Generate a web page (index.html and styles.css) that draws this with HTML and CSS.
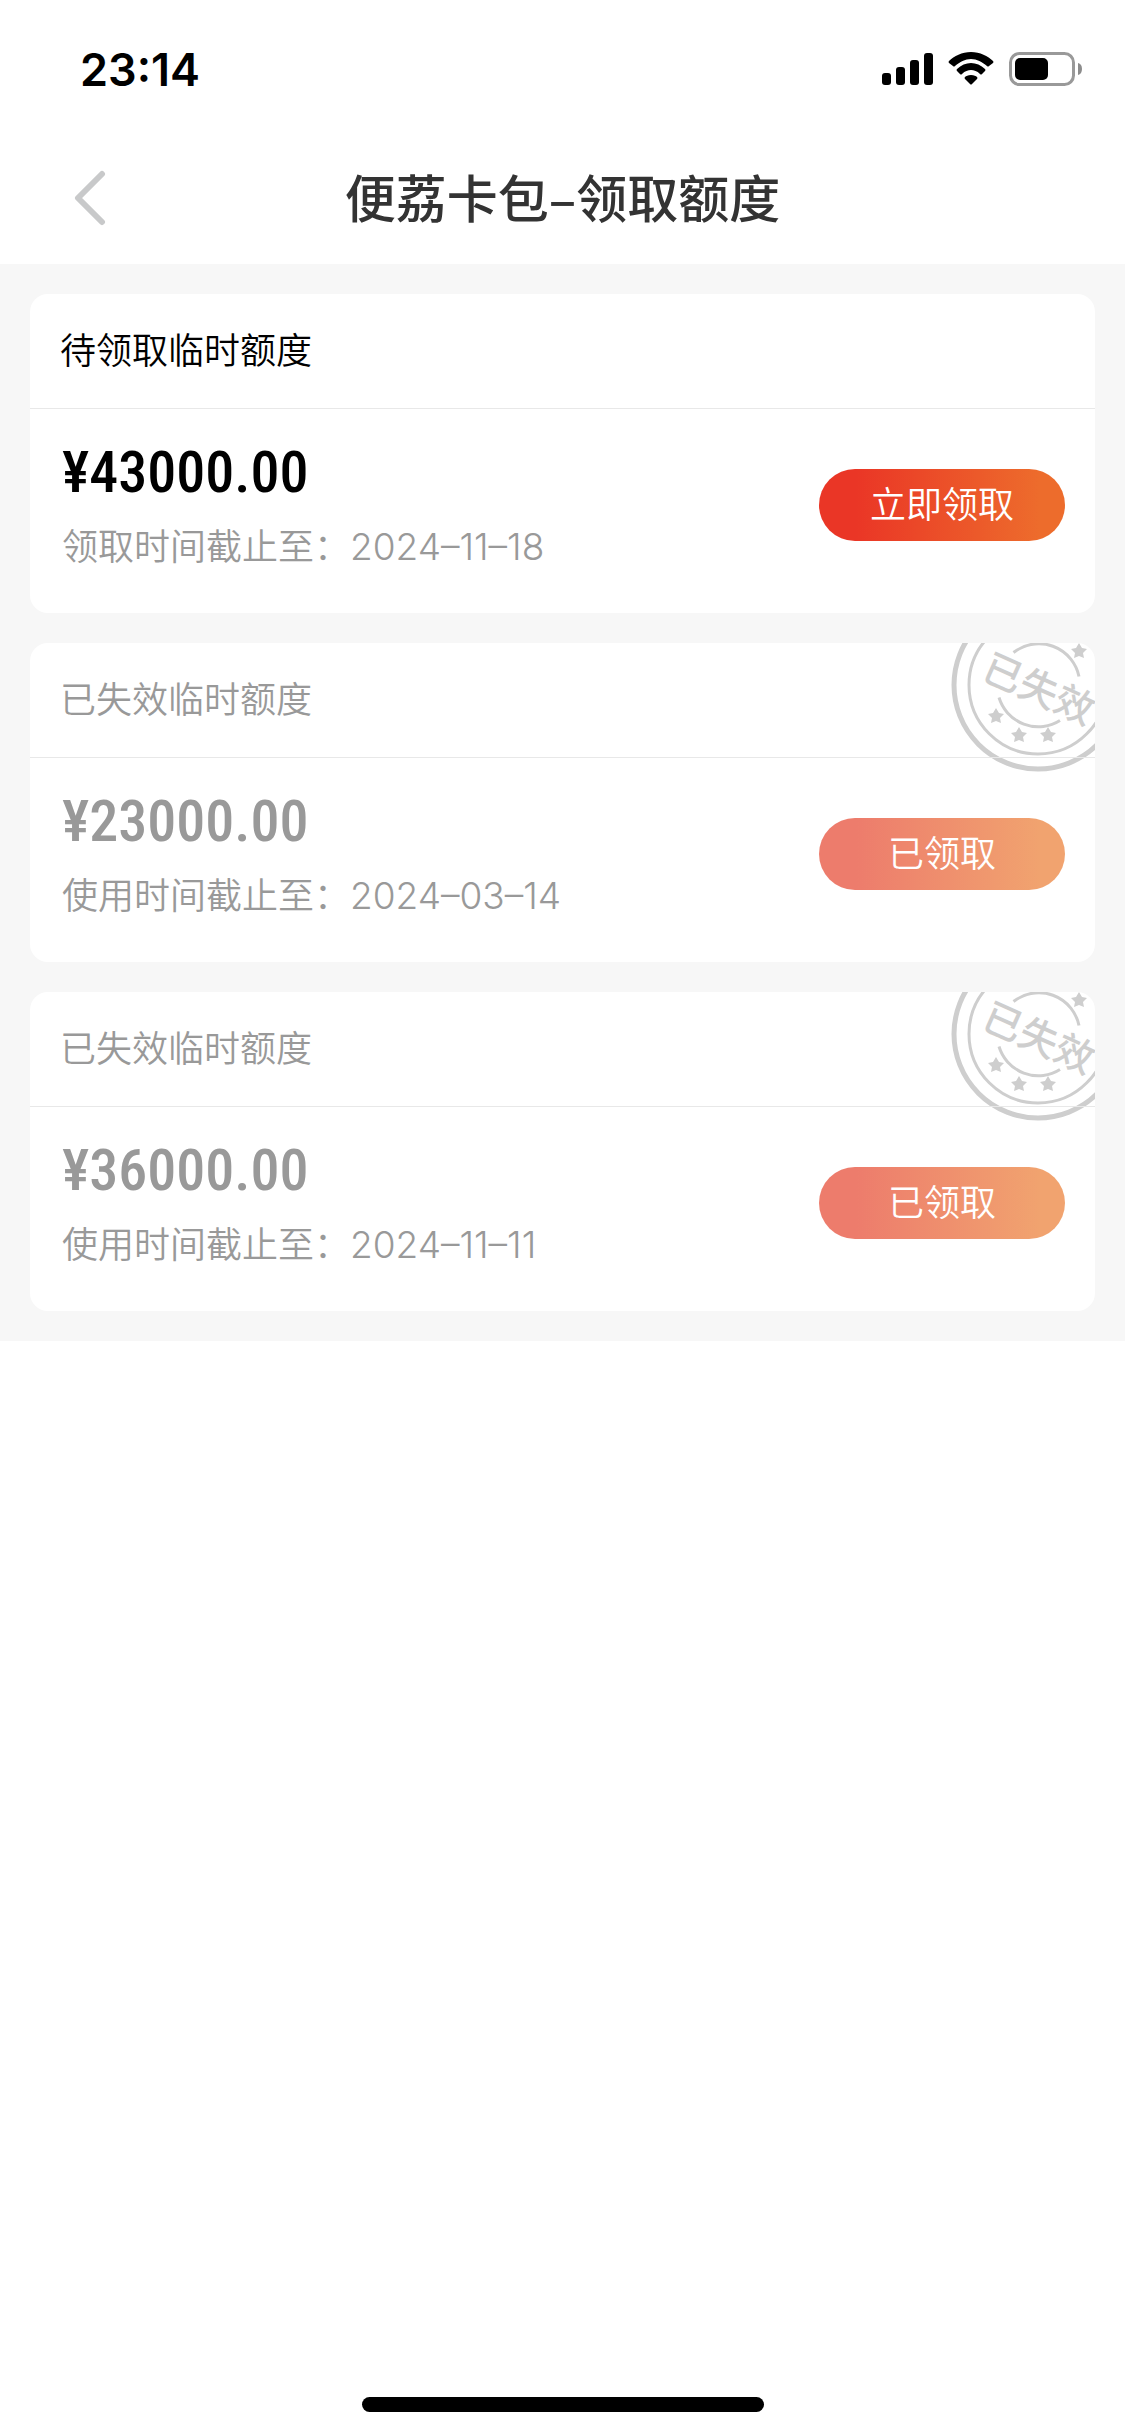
FILE: index.html
```
<!DOCTYPE html>
<html lang="zh-CN">
<head>
  <meta charset="UTF-8" />
  <meta name="viewport" content="width=device-width, initial-scale=1" />
  <title>便荔卡包–领取额度</title>
  <link rel="stylesheet" href="styles.css">
</head>
<body>
  <!-- shared stamp artwork -->
  <svg class="defs" width="0" height="0" aria-hidden="true">
    <defs>
      <path id="star" d="M0 -8 L3 -3 L8 -2 L4 2 L5 7 L0 5 L-5 7 L-4 2 L-8 -2 L-3 -3 Z" />
      <g id="stamp">
        <g fill="none" stroke="currentColor">
          <circle cx="87" cy="42" r="84" stroke-width="5" />
          <circle cx="87" cy="42" r="69" stroke-width="3" />
          <path d="M62.500 9.500 A41 41 0 0 1 128 33.500" stroke-width="3" />
          <path d="M48 54.500 A41 41 0 0 0 109 77.500" stroke-width="3" />
        </g>
        <g fill="currentColor">
          <use href="#star" x="45" y="73" />
          <use href="#star" x="68" y="92" />
          <use href="#star" x="97" y="92" />
          <use href="#star" x="128" y="8" />
          <text class="stamp-text" x="88" y="60" text-anchor="middle" transform="rotate(24 88 46)">已失效</text>
        </g>
      </g>
    </defs>
  </svg>

  <div class="status-bar">
    <span class="time">23:14</span>
    <div class="status-icons">
      <svg width="51" height="34" viewBox="0 0 51 34">
        <rect x="0" y="21" width="9" height="12" rx="3" />
        <rect x="14" y="15" width="9" height="18" rx="3" />
        <rect x="28" y="8" width="9" height="25" rx="3" />
        <rect x="42" y="1" width="9" height="32" rx="3" />
      </svg>
      <svg width="46" height="34" viewBox="0 0 46 34">
        <path d="M23 0 C32 0 40 4 45 9 Q46 10 45 11 L41 14 Q40 15 39 14 C34 10 29 7 23 7 C17 7 12 10 7 14 Q6 15 5 14 L1 11 Q0 10 1 9 C6 4 14 0 23 0 Z" />
        <path d="M23 11 C28 11 33 13 37 17 Q38 18 37 19 L34 22 Q33 23 32 22 C29 19 26 18 23 18 C20 18 17 19 14 22 Q13 23 12 22 L9 19 Q8 18 9 17 C13 13 18 11 23 11 Z" />
        <path d="M23 23 C26 23 28 24 29 25 Q30 26 29 27 L24 32 Q23 33 22 32 L17 27 Q16 26 17 25 C18 24 20 23 23 23 Z" />
      </svg>
      <svg width="74" height="34" viewBox="0 0 74 34">
        <rect x="1.500" y="1.500" width="63" height="31" rx="9" fill="none" stroke="#999" stroke-width="3" />
        <rect x="6" y="6" width="33" height="22" rx="5" />
        <path d="M69 11 Q73 12 73 17 Q73 22 69 23 Z" fill="#8c8c8c" />
      </svg>
    </div>
  </div>

  <header class="nav-bar">
    <button class="back" type="button" aria-label="返回">
      <svg width="32" height="56" viewBox="0 0 32 56">
        <path d="M28 4 L4 28 L28 52" fill="none" stroke="#c8c9ca" stroke-width="6" stroke-linecap="round" stroke-linejoin="round" />
      </svg>
    </button>
    <h1>便荔卡包–领取额度</h1>
  </header>

  <main class="list">
    <section class="card">
      <h2>待领取临时额度</h2>
      <div class="card-body">
        <div class="info">
          <p class="amount">¥43000.00</p>
          <p class="deadline">领取时间截止至：<span class="date">2024–11–18</span></p>
        </div>
        <button class="claim" type="button">立即领取</button>
      </div>
    </section>

    <section class="card expired">
      <svg class="stamp" width="144" height="132" viewBox="0 0 144 132"><use href="#stamp" /></svg>
      <h2>已失效临时额度</h2>
      <div class="card-body">
        <div class="info">
          <p class="amount">¥23000.00</p>
          <p class="deadline">使用时间截止至：<span class="date">2024–03–14</span></p>
        </div>
        <button class="claim" type="button" disabled>已领取</button>
      </div>
    </section>

    <section class="card expired">
      <svg class="stamp" width="144" height="132" viewBox="0 0 144 132"><use href="#stamp" /></svg>
      <h2>已失效临时额度</h2>
      <div class="card-body">
        <div class="info">
          <p class="amount">¥36000.00</p>
          <p class="deadline">使用时间截止至：<span class="date">2024–11–11</span></p>
        </div>
        <button class="claim" type="button" disabled>已领取</button>
      </div>
    </section>
  </main>

  <div class="home-indicator"></div>
</body>
</html>
```
FILE: styles.css
```
* {
  box-sizing: border-box;
}

body {
  margin: 0;
  min-height: 100vh;
  display: flex;
  flex-direction: column;
  background-color: #fff;
  color: #000;
  font-family: "Noto Sans CJK SC", sans-serif;
}

h1, h2, p {
  margin: 0;
}

button {
  border: none;
  padding: 0;
  font-family: inherit;
  cursor: pointer;
}

svg {
  display: block;
}

.defs {
  position: absolute;
}

/* status bar */
.status-bar {
  display: flex;
  justify-content: space-between;
  align-items: center;
  height: 132px;
  padding: 6px 42px 0 80px;
}

.time {
  font-family: Inter, sans-serif;
  font-size: 45px;
  font-weight: 600;
}

.status-icons {
  display: flex;
  align-items: center;
  gap: 15px;
}

/* title bar */
.nav-bar {
  display: grid;
  grid-template-columns: 120px 1fr 120px;
  align-items: center;
  height: 132px;
}

.back {
  display: flex;
  padding-left: 74px;
  background: none;
}

.nav-bar h1 {
  padding-bottom: 4px;
  text-align: center;
  font-size: 51px;
  font-weight: 500;
  line-height: 72px;
  color: #333;
}

/* cards */
.list {
  display: flex;
  flex-direction: column;
  gap: 30px;
  padding: 30px;
  background-color: #f7f7f7;
}

.card {
  position: relative;
  overflow: hidden;
  border-radius: 18px;
  background-color: #fff;
}

.card h2 {
  padding: 27px 30px 33px;
  font-size: 36px;
  font-weight: 350;
  line-height: 54px;
}

.card-body {
  position: relative;
  display: flex;
  justify-content: space-between;
  align-items: center;
  padding: 24px 30px 36px 32px;
  border-top: 1px solid #e8e8e8;
}

.amount {
  font-family: "Roboto Condensed", Roboto, sans-serif;
  font-size: 58px;
  font-weight: 500;
  line-height: 78px;
}

.deadline {
  font-size: 36px;
  font-weight: 350;
  line-height: 66px;
  color: #999;
}

.date {
  font-family: Inter, sans-serif;
  font-size: 37px;
  line-height: 1;
}

.claim {
  width: 246px;
  height: 72px;
  padding-bottom: 6px;
  border-radius: 36px;
  background-image: linear-gradient(to right, #ea3626 15%, #ed6c2c 90%);
  color: #fff;
  font-size: 36px;
  font-weight: 350;
  line-height: 66px;
}

/* expired quota */
.expired {
  color: #999;
}

.expired .claim {
  background-image: linear-gradient(to right, #ed7c6c 15%, #f1a36f 90%);
  cursor: default;
}

.stamp {
  position: absolute;
  top: 0;
  right: 0;
  color: #cecece;
}

.stamp-text {
  font-size: 39px;
  font-weight: 500;
}

.home-indicator {
  width: 402px;
  height: 15px;
  margin: auto auto 24px;
  border-radius: 8px;
  background-color: #000;
}
```
